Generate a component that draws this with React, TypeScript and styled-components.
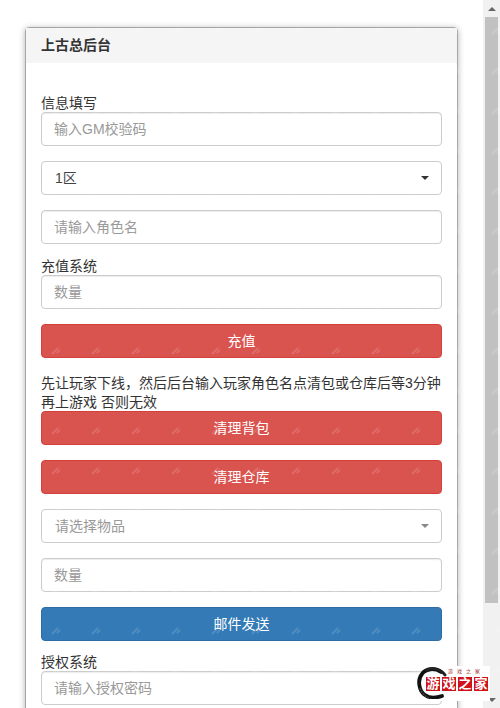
import React from "react";
import styled, { createGlobalStyle } from "styled-components";

const Global = createGlobalStyle`
  html, body { margin: 0; padding: 0; background: #fff; }
  * { box-sizing: border-box; }
  body { font-family: "Liberation Sans", "Noto Sans CJK SC", sans-serif; font-size: 14px; line-height: 20px; color: #333; }
`;

const Page = styled.div`
  position: relative;
  display: flex;
  width: 500px;
  height: 708px;
  overflow: hidden;
`;

const Main = styled.main`
  flex: 1;
  padding: 27px 25px 0 25px;
  min-width: 0;
`;

const Card = styled.section`
  border: 1px solid #a6a6a6;
  border-radius: 4px;
  box-shadow: 0 1px 6px rgba(0, 0, 0, 0.3);
  background: #fff;
`;

const CardHeader = styled.header`
  height: 35px;
  padding: 7px 15px 0;
  background: #f5f5f5;
  font-weight: bold;
  color: #333;
`;

const CardBody = styled.div`
  padding: 29px 15px 0;
`;

const Label = styled.div<{ $top?: number }>`
  height: 20px;
  line-height: 22px;
  margin-top: ${(p) => p.$top ?? 0}px;
  color: #333;
`;

const Field = styled.input<{ $gap?: number }>`
  display: block;
  width: 100%;
  height: 34px;
  margin-bottom: ${(p) => p.$gap ?? 15}px;
  padding: 6px 12px;
  border: 1px solid #ccc;
  border-radius: 4px;
  background: #fff;
  font: inherit;
  color: #555;
  box-shadow: inset 0 1px 1px rgba(0, 0, 0, 0.075);
  &::placeholder { color: #999; opacity: 1; }
`;

const Select = styled.div<{ $muted?: boolean }>`
  display: flex;
  align-items: center;
  justify-content: space-between;
  height: 34px;
  margin-bottom: 15px;
  padding: 0 12px 0 13px;
  border: 1px solid #ccc;
  border-radius: 4px;
  background: #fff;
  color: ${(p) => (p.$muted ? "#999" : "#444")};
`;

const Caret = styled.span<{ $muted?: boolean }>`
  width: 0;
  height: 0;
  border-left: 4px solid transparent;
  border-right: 4px solid transparent;
  border-top: 4px solid ${(p) => (p.$muted ? "#888" : "#333")};
`;

const Button = styled.button<{ $tone: "danger" | "primary" }>`
  display: block;
  width: 100%;
  height: 34px;
  margin-bottom: 15px;
  padding: 0;
  border: 1px solid ${(p) => (p.$tone === "danger" ? "#d43f3a" : "#2e6da4")};
  border-radius: 4px;
  background: ${(p) => (p.$tone === "danger" ? "#d9534f" : "#337ab7")};
  color: #fff;
  font: inherit;
  text-align: center;
`;

const Note = styled.p`
  height: 40px;
  margin: -2px 0 0;
  padding-top: 3px;
  line-height: 19px;
  color: #333;
`;

const ScrollTrack = styled.aside`
  flex: none;
  display: flex;
  flex-direction: column;
  width: 17px;
  padding: 0 2px;
  background: #f1f1f1;
`;

const ScrollArrow = styled.div`
  flex: none;
  height: 17px;
  display: flex;
  align-items: center;
  justify-content: center;
`;

const ArrowUp = styled.span`
  width: 0;
  height: 0;
  border-left: 4px solid transparent;
  border-right: 4px solid transparent;
  border-bottom: 4px solid #666;
`;

const ArrowDown = styled.span`
  width: 0;
  height: 0;
  border-left: 4px solid transparent;
  border-right: 4px solid transparent;
  border-top: 4px solid #666;
`;

const ScrollThumb = styled.div`
  flex: none;
  height: 586px;
  background: #c1c1c1;
`;

const ScrollRest = styled.div`
  flex: 1;
`;

const WatermarkLayer = styled.svg`
  position: absolute;
  inset: 0;
  width: 100%;
  height: 100%;
  pointer-events: none;
`;

const Badge = styled.div`
  position: absolute;
  left: 417px;
  top: 666px;
  width: 73px;
  height: 35px;
  background: linear-gradient(90deg, transparent 0, #fff 30%);
`;

const BadgeSwirl = styled.svg`
  position: absolute;
  left: 0;
  top: 1px;
  width: 30px;
  height: 32px;
`;

const BadgeTop = styled.div`
  position: absolute;
  left: 31px;
  top: 2px;
  font-size: 5px;
  line-height: 6px;
  letter-spacing: 4px;
  color: #a33;
  white-space: nowrap;
`;

const BadgeTiles = styled.div`
  position: absolute;
  left: 9px;
  top: 11px;
  display: flex;
  gap: 2px;
`;

const BadgeTile = styled.span`
  width: 14px;
  height: 14px;
  background: #d0121b;
  color: #fff;
  font-size: 13px;
  font-weight: bold;
  line-height: 14px;
  text-align: center;
`;

export default function App() {
  return (
    <Page>
      <Global />
      <Main>
        <Card>
          <CardHeader>上古总后台</CardHeader>
          <CardBody>
            <Label>信息填写</Label>
            <Field placeholder="输入GM校验码" />
            <Select>
              <span>1区</span>
              <Caret />
            </Select>
            <Field placeholder="请输入角色名" $gap={11} />
            <Label>充值系统</Label>
            <Field placeholder="数量" />
            <Button $tone="danger">充值</Button>
            <Note>先让玩家下线，然后后台输入玩家角色名点清包或仓库后等3分钟再上游戏 否则无效</Note>
            <Button $tone="danger">清理背包</Button>
            <Button $tone="danger">清理仓库</Button>
            <Select $muted>
              <span>请选择物品</span>
              <Caret $muted />
            </Select>
            <Field placeholder="数量" />
            <Button $tone="primary">邮件发送</Button>
            <Label $top={-5}>授权系统</Label>
            <Field placeholder="请输入授权密码" />
          </CardBody>
        </Card>
      </Main>
      <ScrollTrack>
        <ScrollArrow>
          <ArrowUp />
        </ScrollArrow>
        <ScrollThumb />
        <ScrollRest />
        <ScrollArrow>
          <ArrowDown />
        </ScrollArrow>
      </ScrollTrack>
      <WatermarkLayer aria-hidden="true">
        <defs>
          <pattern id="wm" x="20" y="10" width="40" height="40" patternUnits="userSpaceOnUse">
            <path d="M32 24l6-6M37 23l5-5M40 17l3 3" stroke="#fff" strokeOpacity="0.14" strokeWidth="1.8" fill="none" />
          </pattern>
        </defs>
        <rect width="100%" height="100%" fill="url(#wm)" />
      </WatermarkLayer>
      <Badge>
        <BadgeSwirl viewBox="0 0 30 32">
          <path
            d="M24 5C18 1 9 1 5 7C0 13 2 24 8 28C12 31 19 31 25 29"
            fill="none"
            stroke="#111"
            strokeWidth="3.8"
            strokeLinecap="round"
          />
          <path d="M10 3C16 0 24 2 28 8" fill="none" stroke="#222" strokeWidth="3" strokeLinecap="round" />
          <path d="M3 21C5 26 8 30 14 32" fill="none" stroke="#444" strokeWidth="1.5" strokeDasharray="2 1" />
        </BadgeSwirl>
        <BadgeTop>游戏之家</BadgeTop>
        <BadgeTiles>
          <BadgeTile>游</BadgeTile>
          <BadgeTile>戏</BadgeTile>
          <BadgeTile>之</BadgeTile>
          <BadgeTile>家</BadgeTile>
        </BadgeTiles>
      </Badge>
    </Page>
  );
}
